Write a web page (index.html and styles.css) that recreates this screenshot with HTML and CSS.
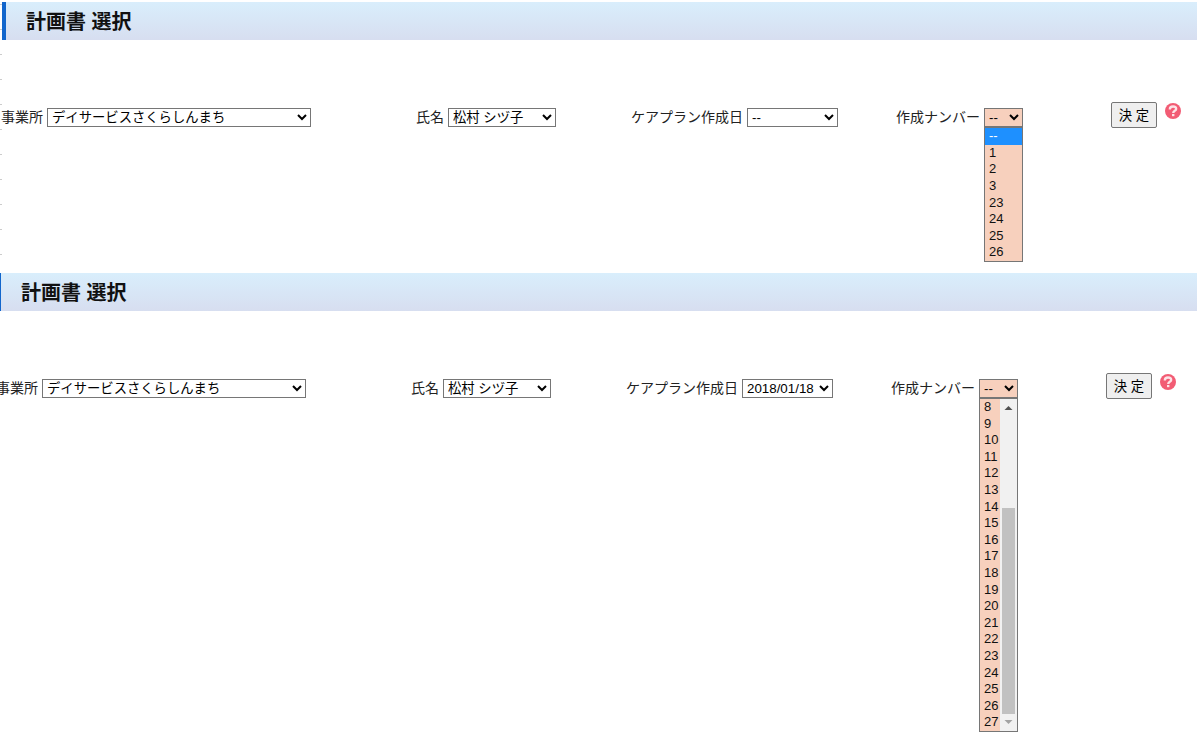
FILE: index.html
```html
<!DOCTYPE html>
<html lang="ja">
<head>
<meta charset="utf-8">
<title>計画書 選択</title>
<link rel="stylesheet" href="styles.css">
</head>
<body>
<main>
  <section class="panel panel-ruled">
    <h2 class="title">計画書 選択</h2>
    <form class="fields">
      <div class="field"><label for="office1">事業所</label><select id="office1" class="office"><option>デイサービスさくらしんまち</option></select></div>
      <div class="field"><label for="name1">氏名</label><select id="name1" class="person"><option>松村 シヅ子</option></select></div>
      <div class="field"><label for="date1">ケアプラン作成日</label><select id="date1" class="date"><option>--</option></select></div>
      <div class="field"><label for="num1">作成ナンバー</label>
        <div class="picker">
          <select id="num1" class="number"><option>--</option></select>
          <div class="popup popup-short">
            <ul class="options" role="listbox" aria-label="作成ナンバー">
              <li role="option" aria-selected="true" class="active">--</li><li role="option">1</li><li role="option">2</li><li role="option">3</li><li role="option">23</li><li role="option">24</li><li role="option">25</li><li role="option">26</li>
            </ul>
          </div>
        </div>
      </div>
      <div class="actions">
        <button type="button" class="submit">決 定</button>
        <button type="button" class="help" aria-label="ヘルプ"><svg viewBox="0 0 16 16" width="16" height="16"><circle cx="8" cy="8" r="8" fill="#f25c74"/><path d="M4.800 6.400C4.800 4.300 6.300 3.500 8 3.500s3.200.8 3.200 2.500C11.200 7.800 8.200 7.800 8.200 9.900" fill="none" stroke="#fde3e7" stroke-width="2.300"/><rect x="7" y="11" width="2.400" height="2.200" fill="#fde3e7"/></svg></button>
      </div>
    </form>
  </section>

  <section class="panel panel-shifted">
    <h2 class="title">計画書 選択</h2>
    <form class="fields">
      <div class="field"><label for="office2">事業所</label><select id="office2" class="office"><option>デイサービスさくらしんまち</option></select></div>
      <div class="field"><label for="name2">氏名</label><select id="name2" class="person"><option>松村 シヅ子</option></select></div>
      <div class="field"><label for="date2">ケアプラン作成日</label><select id="date2" class="date"><option>2018/01/18</option></select></div>
      <div class="field"><label for="num2">作成ナンバー</label>
        <div class="picker">
          <select id="num2" class="number"><option>--</option></select>
          <div class="popup popup-long">
            <ul class="options" role="listbox" aria-label="作成ナンバー">
              <li role="option">8</li><li role="option">9</li><li role="option">10</li><li role="option">11</li><li role="option">12</li><li role="option">13</li><li role="option">14</li><li role="option">15</li><li role="option">16</li><li role="option">17</li><li role="option">18</li><li role="option">19</li><li role="option">20</li><li role="option">21</li><li role="option">22</li><li role="option">23</li><li role="option">24</li><li role="option">25</li><li role="option">26</li><li role="option">27</li>
            </ul>
            <div class="scrollbar">
              <svg viewBox="0 0 17 17" width="17" height="17"><path d="M4.500 11L8.500 7L12.500 11Z" fill="#505050"/></svg>
              <div class="track"><div class="thumb"></div></div>
              <svg viewBox="0 0 17 17" width="17" height="17"><path d="M4.500 6L12.500 6L8.500 10Z" fill="#a3a3a3"/></svg>
            </div>
          </div>
        </div>
      </div>
      <div class="actions">
        <button type="button" class="submit">決 定</button>
        <button type="button" class="help" aria-label="ヘルプ"><svg viewBox="0 0 16 16" width="16" height="16"><circle cx="8" cy="8" r="8" fill="#f25c74"/><path d="M4.800 6.400C4.800 4.300 6.300 3.500 8 3.500s3.200.8 3.200 2.500C11.200 7.800 8.200 7.800 8.200 9.900" fill="none" stroke="#fde3e7" stroke-width="2.300"/><rect x="7" y="11" width="2.400" height="2.200" fill="#fde3e7"/></svg></button>
      </div>
    </form>
  </section>
</main>
</body>
</html>
```
FILE: styles.css
```css
* { box-sizing: border-box; }

body {
  margin: 0;
  background: #fff;
  color: #111;
  font-family: "Liberation Sans", "Noto Sans CJK JP", sans-serif;
  overflow: hidden;
}

main { min-height: 100vh; }

/* The first panel has a faint ruler in its left gutter */
.panel-ruled {
  padding: 2px 0 145px 2px;
  background: repeating-linear-gradient(#fff 0 4px, #ccc 4px 5px, #fff 5px 25px) 0 0 / 2px 100% no-repeat;
}

.panel-shifted { margin-left: -3px; }
.panel-ruled .fields { margin: 0 -1px; }
.panel-shifted .fields { margin: 0 4px 0 -1px; }

.title {
  display: flex;
  align-items: center;
  height: 38px;
  margin: 0 0 62px;
  padding: 2px 0 0 20px;
  border-left: 4px solid #1266cc;
  background: linear-gradient(#d9eefc, #d7def0);
  font-size: 20px;
  line-height: 36px;
}

.fields {
  display: grid;
  grid-template-columns: 415fr 215fr 265fr 215fr 87fr;
  align-items: start;
}

.field {
  display: flex;
  align-items: center;
  gap: 4px;
  height: 19px;
  margin-top: 6px;
  font-size: 14px;
  line-height: 19px;
  white-space: nowrap;
}

.panel label { color: #222; }

select {
  height: 19px;
  margin: 0;
  padding: 0;
  border: 1px solid #767676;
  border-radius: 0;
  background-color: #fff;
  color: #000;
  font-family: inherit;
}

.office { width: 264px; }
.person { width: 108px; }
.date { width: 91px; }
.number { width: 39px; background-color: #f7d0bd; }

.picker { position: relative; display: flex; }

.popup {
  position: absolute;
  top: 100%;
  left: 0;
  display: flex;
  width: 100%;
  border: 1px solid #767676;
  background: #f7d0bd;
  color: #111;
  font-size: 13px;
}

.popup-short { height: 135px; }
.popup-long { height: 334px; }

.options {
  display: grid;
  grid-auto-rows: 1fr;
  flex: 1;
  min-width: 0;
  margin: 0;
  padding: 0;
  list-style: none;
  line-height: 16px;
}

.options li { min-height: 0; padding-left: 4px; }
.options .active { background: #1e90ff; color: #fff; }

.scrollbar {
  display: flex;
  flex-direction: column;
  width: 17px;
  background: #f1f1f1;
}

.scrollbar svg { display: block; }

.track {
  display: flex;
  flex: 1;
  align-items: flex-end;
  padding: 0 2px;
}

.thumb { width: 100%; height: 69%; background: #c1c1c1; }

.actions { display: flex; align-items: flex-start; gap: 8px; }

.submit {
  width: 46px;
  height: 26px;
  padding: 0 0 2px;
  border: 1px solid #767676;
  border-radius: 2px;
  background: #efefef;
  color: #000;
  font-family: inherit;
  white-space: nowrap;
}

.help {
  margin-top: 1px;
  padding: 0;
  border: 0;
  background: none;
}

.help svg { display: block; }
```
